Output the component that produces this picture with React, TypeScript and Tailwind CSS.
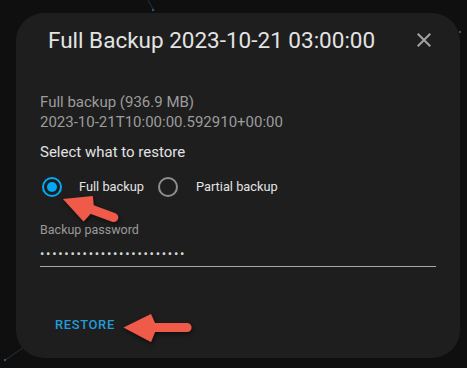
import React from 'react'

function Radio({ checked }: { checked: boolean }) {
  return (
    <span
      className={
        checked
          ? 'flex h-5 w-5 items-center justify-center rounded-full border-2 border-[#03a9f4]'
          : 'flex h-5 w-5 items-center justify-center rounded-full border-2 border-[#8f8f8f]'
      }
    >
      {checked && <span className="h-[10px] w-[10px] rounded-full bg-[#03a9f4]" />}
    </span>
  )
}

export default function App() {
  return (
    <div className="relative h-[368px] w-[467px] overflow-hidden bg-[#0f0f0f] font-['Roboto',sans-serif]">
      {/* faint diagram lines behind the dialog */}
      <svg className="absolute inset-0" width="467" height="368" aria-hidden="true">
        <line x1="148" y1="0" x2="154" y2="11" stroke="#26323d" strokeWidth="1" />
        <circle cx="153" cy="10" r="1.2" fill="#2f5874" />
        <line x1="4" y1="361" x2="24" y2="347" stroke="#26323d" strokeWidth="1" />
        <circle cx="5" cy="360" r="1.2" fill="#2f5874" />
        <circle cx="460" cy="32" r="1.2" fill="#2f5874" />
      </svg>

      {/* Dialog */}
      <div className="relative ml-4 mt-[13px] flex h-[345px] w-[444px] flex-col rounded-[28px] bg-[#1e1e1e]">
        <div className="flex items-center justify-between pl-8 pr-6 pt-[13px]">
          <h2 className="text-[22.5px] leading-7 text-[#e3e3e3]">Full Backup 2023-10-21 03:00:00</h2>
          <svg width="24" height="24" viewBox="0 0 24 24" fill="#a3a3a3" aria-label="Close">
            <path d="M19 6.41L17.59 5 12 10.59 6.41 5 5 6.41 10.59 12 5 17.59 6.41 19 12 13.41 17.59 19 19 17.59 13.41 12z" />
          </svg>
        </div>

        <div className="mt-[38px] px-6">
          <div className="text-[15px] leading-5 text-[#9c9c9c]">
            <div>Full backup (936.9 MB)</div>
            <div>2023-10-21T10:00:00.592910+00:00</div>
          </div>
          <div className="mt-[10px] text-[15px] leading-5 text-[#e3e3e3]">Select what to restore</div>

          <div className="mt-[5px] flex h-10 items-center text-[12.8px] text-[#e3e3e3]">
            <span className="ml-[2px]">
              <Radio checked />
            </span>
            <span className="ml-[17px]">Full backup</span>
            <span className="ml-[14px]">
              <Radio checked={false} />
            </span>
            <span className="ml-[18px]">Partial backup</span>
          </div>

          <div className="mt-[15px] text-[12.5px] leading-4 text-[#9a9a9a]">Backup password</div>
          <div className="mt-[3px] h-[26px] border-b border-[#a8a8a8]">
            <span className="text-[13px] leading-5 tracking-[1.7px] text-[#d6d6d6]">
              ••••••••••••••••••••••••
            </span>
          </div>
        </div>

        <div className="mt-auto pb-[22px] pl-[39px]">
          <button className="text-[13px] font-medium leading-4 tracking-[0.6px] text-[#239bd8]">RESTORE</button>
        </div>
      </div>

      {/* annotation arrows */}
      <svg className="pointer-events-none absolute inset-0" width="467" height="368" aria-hidden="true">
        <defs>
          <filter id="shadow" x="-20%" y="-40%" width="140%" height="180%">
            <feDropShadow dx="1" dy="2" stdDeviation="2" floodColor="#000" floodOpacity="0.55" />
          </filter>
        </defs>
        <g filter="url(#shadow)" fill="#f05a4a">
          <path d="M0,0 L27,-13 L31,-4.5 L54,-4.5 A4.5,4.5 0 0 1 54,4.5 L31,4.5 L27,14 Z" transform="translate(63 199) rotate(20)" />
          <path d="M123.5,327.5 L151,314 L155,323 L187,323 A4.5,4.5 0 0 1 187,332 L155,332 L151,342 Z" />
        </g>
      </svg>
    </div>
  )
}
